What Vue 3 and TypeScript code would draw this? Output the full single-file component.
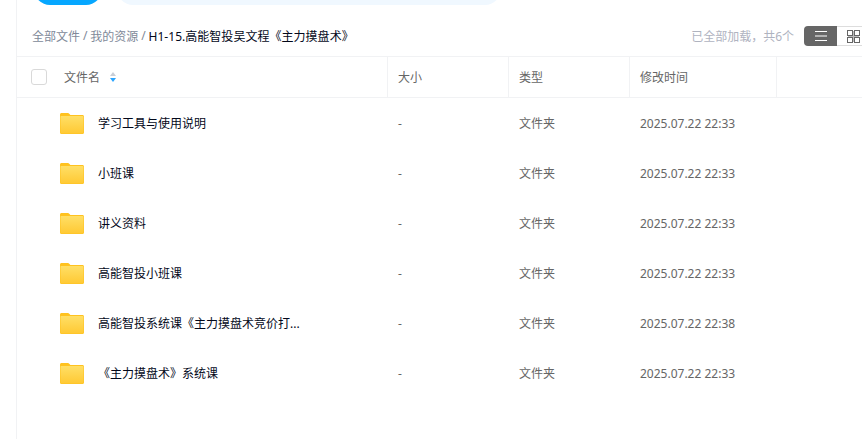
<script setup lang="ts">
interface FileRow {
  name: string;
  time: string;
}

const files: FileRow[] = [
  { name: '学习工具与使用说明', time: '2025.07.22 22:33' },
  { name: '小班课', time: '2025.07.22 22:33' },
  { name: '讲义资料', time: '2025.07.22 22:33' },
  { name: '高能智投小班课', time: '2025.07.22 22:33' },
  { name: '高能智投系统课《主力摸盘术竞价打...', time: '2025.07.22 22:38' },
  { name: '《主力摸盘术》系统课', time: '2025.07.22 22:33' },
];
</script>

<template>
  <div class="page">
    <div class="top-actions">
      <div class="btn-upload"></div>
      <div class="notice"></div>
    </div>

    <div class="toolbar">
      <div class="crumbs">
        <span class="crumb-link">全部文件</span>
        <span class="crumb-sep">/</span>
        <span class="crumb-link">我的资源</span>
        <span class="crumb-sep">/</span>
        <span class="crumb-current">H1-15.高能智投吴文程《主力摸盘术》</span>
      </div>
      <div class="toolbar-right">
        <span class="load-info">已全部加载，共6个</span>
        <div class="view-switch">
          <div class="view-btn active">
            <svg width="14" height="12" viewBox="0 0 14 12">
              <path d="M1 1.500h12M1 6h12M1 10.500h12" stroke="#fff" stroke-width="1.200" fill="none" />
            </svg>
          </div>
          <div class="view-btn">
            <svg width="13" height="13" viewBox="0 0 13 13">
              <rect x="1" y="1" width="11" height="11" fill="#bbb" />
              <rect x="0.500" y="0.500" width="5" height="5" fill="#fff" stroke="#666" />
              <rect x="7.500" y="0.500" width="5" height="5" fill="#fff" stroke="#666" />
              <rect x="0.500" y="7.500" width="5" height="5" fill="#fff" stroke="#666" />
              <rect x="7.500" y="7.500" width="5" height="5" fill="#fff" stroke="#666" />
            </svg>
          </div>
        </div>
      </div>
    </div>

    <div class="table-head">
      <div class="cell col-name">
        <span class="checkbox"></span>
        <span class="head-name">文件名</span>
        <svg class="sort" width="6" height="10" viewBox="0 0 6 10">
          <path d="M3 0L6 4H0z" fill="#c9ced6" />
          <path d="M3 10L0 6h6z" fill="#2aa5ff" />
        </svg>
      </div>
      <div class="cell col-size">大小</div>
      <div class="cell col-type">类型</div>
      <div class="cell col-time">修改时间</div>
      <div class="cell col-rest"></div>
    </div>

    <div v-for="file in files" :key="file.name" class="row">
      <div class="cell-name">
        <svg class="folder" width="24" height="21" viewBox="0 0 24 21">
          <defs>
            <linearGradient id="folderFill" x1="0" y1="0" x2="0" y2="1">
              <stop offset="0" stop-color="#ffdf66" />
              <stop offset="1" stop-color="#ffc933" />
            </linearGradient>
          </defs>
          <path d="M1.500 0h6.200c.8 0 1.300.3 1.800.9l.9 1.100h12.100c.8 0 1.500.7 1.500 1.500V19.500c0 .8-.7 1.500-1.500 1.500H1.500C.7 21 0 20.300 0 19.500V1.500C0 .7.700 0 1.500 0z" fill="#ffc21f" />
          <path d="M1.500 3h21c.6 0 1 .4 1 1v15.500c0 .6-.4 1-1 1h-21c-.6 0-1-.4-1-1V4c0-.6.400-1 1-1z" fill="url(#folderFill)" />
        </svg>
        <span class="file-name">{{ file.name }}</span>
      </div>
      <div class="col-size body-cell">-</div>
      <div class="col-type body-cell">文件夹</div>
      <div class="col-time body-cell">{{ file.time }}</div>
    </div>
  </div>
</template>

<style>
html,
body {
  margin: 0;
  background: #fff;
  overflow: hidden;
}
</style>

<style scoped>
.page {
  width: 846px;
  height: 439px;
  margin-left: 16px;
  box-sizing: border-box;
  border-left: 1px solid #f1f2f4;
  overflow: hidden;
  font-family: "Noto Sans", "Noto Sans CJK SC", sans-serif;
  font-size: 12px;
  color: #666;
}

.top-actions {
  height: 5px;
  display: flex;
  align-items: flex-end;
  gap: 15px;
  padding-left: 17px;
  overflow: hidden;
}

.btn-upload {
  width: 68px;
  height: 32px;
  flex: none;
  border-radius: 16px;
  background: #06a7ff;
}

.notice {
  width: 384px;
  height: 32px;
  flex: none;
  border-radius: 16px;
  background: #f0f8ff;
}

.toolbar {
  height: 51px;
  padding: 21px 0 10px 15px;
  display: flex;
  align-items: center;
  justify-content: space-between;
  box-sizing: border-box;
}

.crumbs {
  display: flex;
  gap: 2.9px;
  color: #818999;
}

.crumb-current {
  color: #03081a;
  letter-spacing: 0.03px;
}

.toolbar-right {
  display: flex;
  align-items: center;
  gap: 10px;
  margin-right: -8px;
}

.load-info {
  color: #afb3bf;
}

.view-switch {
  display: flex;
  width: 66px;
  flex: none;
}

.view-btn {
  width: 33px;
  height: 20px;
  box-sizing: border-box;
  display: flex;
  align-items: center;
  justify-content: center;
  border: 1px solid #ddd;
  border-left: none;
}

.view-btn.active {
  background: #666;
  border: none;
  border-radius: 4px 0 0 4px;
}

.table-head {
  height: 42px;
  box-sizing: border-box;
  display: flex;
  border-top: 1px solid #f1f2f4;
  border-bottom: 1px solid #f1f2f4;
}

.cell {
  display: flex;
  align-items: center;
  box-sizing: border-box;
  border-right: 1px solid #f1f2f4;
}

.col-name {
  width: 371px;
  flex: none;
  padding-left: 14px;
}

.col-size,
.col-type,
.col-time {
  width: 121px;
  flex: none;
  padding-left: 10px;
  box-sizing: border-box;
}

.col-time {
  width: 147px;
}

.col-rest {
  flex: 1;
  border-right: none;
}

.checkbox {
  width: 14px;
  height: 14px;
  border: 1px solid #d9d9d9;
  border-radius: 3px;
}

.head-name {
  margin-left: 17px;
}

.sort {
  margin-left: 10px;
}

.row {
  height: 50px;
  display: flex;
  align-items: center;
}

.cell-name {
  width: 371px;
  flex: none;
  display: flex;
  align-items: center;
  padding-left: 43px;
  box-sizing: border-box;
}

.folder {
  flex: none;
}

.file-name {
  margin-left: 14px;
  color: #03081a;
  white-space: nowrap;
}

.body-cell {
  color: #666;
}
</style>
